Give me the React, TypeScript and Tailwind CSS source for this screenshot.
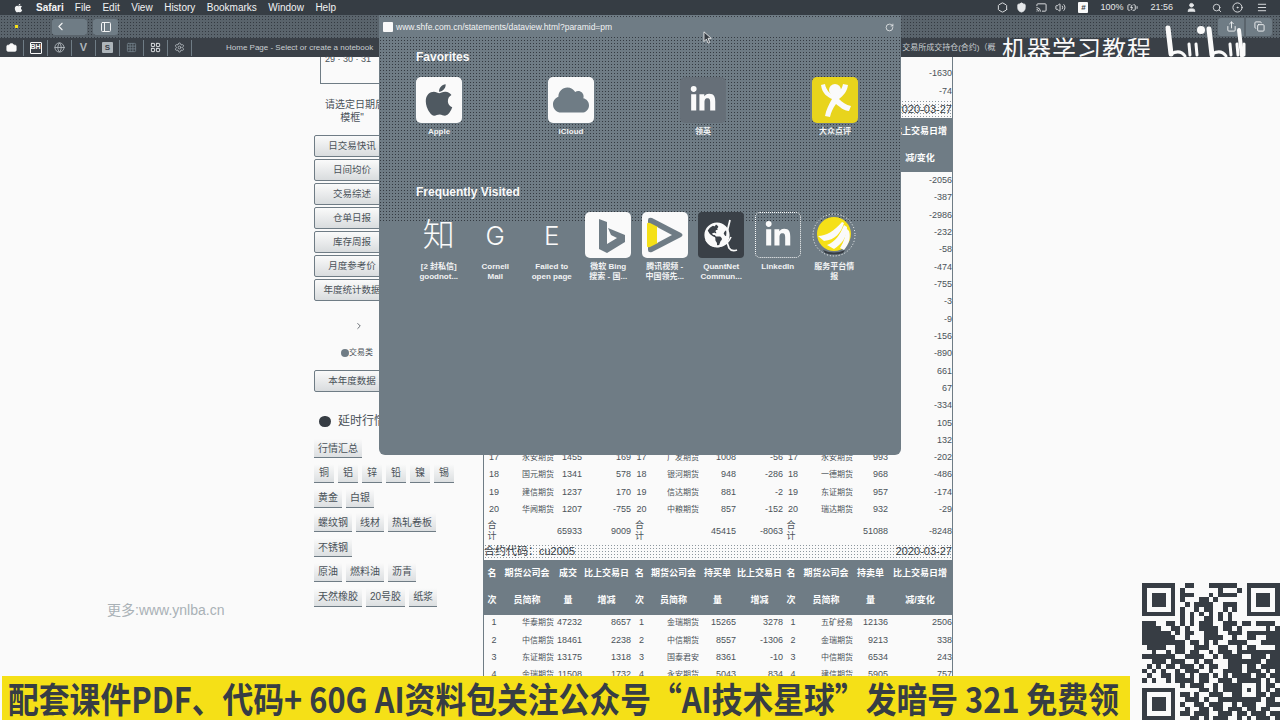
import { ChevronLeft, ChevronRight, PanelLeft, RotateCw, Share, Copy, Search, Volume2, BatteryCharging, Menu, User, Shield, Cast, Globe, Settings, Hexagon, CircleDot, Grid3x3, LayoutGrid, Camera } from "lucide-react";
import { FaApple, FaCloud, FaLinkedinIn, FaGlobeAmericas } from "react-icons/fa";

const DOTS_DARK = "bg-[radial-gradient(circle,#343a41_0.8px,transparent_1px)] bg-[length:3px_3px]";
const DOTS_SOFT = "bg-[radial-gradient(circle,#8d979e_0.8px,transparent_1px)] bg-[length:3px_3px]";

const menus = ["File", "Edit", "View", "History", "Bookmarks", "Window", "Help"];
const sideButtons = ["日交易快讯", "日间均价", "交易综述", "仓单日报", "库存周报", "月度参考价", "年度统计数据"];
const tagRows = [
  ["行情汇总"],
  ["铜", "铝", "锌", "铅", "镍", "锡"],
  ["黄金", "白银"],
  ["螺纹钢", "线材", "热轧卷板"],
  ["不锈钢"],
  ["原油", "燃料油", "沥青"],
  ["天然橡胶", "20号胶", "纸浆"],
];

const hiddenChanges = ["-2056", "-387", "-2986", "-232", "-58", "-474", "-755", "-3", "-9", "-156", "-890", "661", "67", "-334", "105", "132"];

const firstRows = [
  ["17", "永安期货", "1455", "169", "17", "广发期货", "1008", "-56", "17", "永安期货", "993", "-202"],
  ["18", "国元期货", "1341", "578", "18", "银河期货", "948", "-286", "18", "一德期货", "968", "-486"],
  ["19", "建信期货", "1237", "170", "19", "信达期货", "881", "-2", "19", "东证期货", "957", "-174"],
  ["20", "华闻期货", "1207", "-755", "20", "中粮期货", "857", "-152", "20", "瑞达期货", "932", "-29"],
];
const secondRows = [
  ["1", "华泰期货", "47232", "8657", "1", "金瑞期货", "15265", "3278", "1", "五矿经易", "12136", "2506"],
  ["2", "中信期货", "18461", "2238", "2", "中信期货", "8557", "-1306", "2", "金瑞期货", "9213", "338"],
  ["3", "东证期货", "13175", "1318", "3", "国泰君安", "8361", "-10", "3", "中信期货", "6534", "243"],
  ["4", "金瑞期货", "11508", "1732", "4", "永安期货", "5043", "834", "4", "建信期货", "5905", "757"],
];

const qrRows = [
  "00000000011000111111000000000",
  "00000000100000001000100000000",
  "00000000111000101111000000000",
  "00000000100011010000000000000",
  "00000000010111100111000000000",
  "00000000100101100101000000000",
  "00000000101010101010000000000",
  "00000000101001101010000000000",
  "11100110101011100111011011110",
  "11110011010011110110100000101",
  "11111101011001110011101111111",
  "11111110010001111001001100111",
  "11111111101101010011110001111",
  "01111001100111001100101100001",
  "00100101101100101110111111111",
  "11111110011110010111100111011",
  "00111011100101100011111110111",
  "01010110111010110011101101111",
  "10101001011100100111101110101",
  "01001101101011010101111011011",
  "10100101111011001110111110101",
  "00000000101110010111100010110",
  "00000000000011010111101010101",
  "00000000110100111001100011011",
  "00000000011101001111111110110",
  "00000000100110111001011100111",
  "00000000010011011011101101100",
  "00000000110111001110110111011",
  "00000000001101011100101011101",
];

function Finder({ x, y }: { x: number; y: number }) {
  return (
    <g>
      <rect x={x} y={y} width="7" height="7" fill="#373d44" />
      <rect x={x + 1} y={y + 1} width="5" height="5" fill="#fafafa" />
      <rect x={x + 2} y={y + 2} width="3" height="3" fill="#373d44" />
    </g>
  );
}

function QrCode() {
  return (
    <svg viewBox="0 0 29 29" className="w-[138px] h-[138px]" shapeRendering="crispEdges">
      {qrRows.map((row, y) =>
        row.split("").map((c, x) => (c === "1" ? <rect key={`${x}-${y}`} x={x} y={y} width="1" height="1" fill="#373d44" /> : null)),
      )}
      <Finder x={0} y={0} />
      <Finder x={22} y={0} />
      <Finder x={0} y={22} />
    </svg>
  );
}

function cellClass(i: number) {
  if (i % 4 === 0) return "pl-1 text-center";
  if (i % 4 === 1) return "text-right text-[8px] whitespace-nowrap";
  return "text-right whitespace-nowrap";
}

function Row({ cells, h = "h-[17.33px]" }: { cells: string[]; h?: string }) {
  return (
    <div className={`grid grid-cols-[16px_54px_28px_49px_17px_51px_37px_47px_16px_54px_35px_64px] items-center text-[9px] text-[#4a5259] ${h}`}>
      {cells.map((c, i) => (
        <span key={i} className={cellClass(i)}>
          {c}
        </span>
      ))}
    </div>
  );
}

function TotalRow({ cells }: { cells: string[] }) {
  return (
    <div className="grid grid-cols-[16px_54px_28px_49px_17px_51px_37px_47px_16px_54px_35px_64px] items-center text-[9px] leading-[11px] text-[#4a5259] h-[25px]">
      {cells.map((c, i) => (
        <span key={i} className={i % 4 === 0 ? "text-center" : "text-right"}>
          {c}
        </span>
      ))}
    </div>
  );
}

function HeaderBand({ h }: { h: string }) {
  const top = ["名", "期货公司会", "成交", "比上交易日", "名", "期货公司会", "持买单", "比上交易日", "名", "期货公司会", "持卖单", "比上交易日增"];
  const bottom = ["次", "员简称", "量", "增减", "次", "员简称", "量", "增减", "次", "员简称", "量", "减/变化"];
  return (
    <div className={`bg-[#6f7c85] text-white text-[9px] font-bold flex flex-col justify-center ${h}`}>
      {[top, bottom].map((line, n) => (
        <div key={n} className="grid grid-cols-[16px_54px_28px_49px_17px_51px_37px_47px_16px_54px_35px_64px] h-[27px] items-center text-center">
          {line.map((c, i) => (
            <span key={i} className="whitespace-nowrap">
              {c}
            </span>
          ))}
        </div>
      ))}
    </div>
  );
}

function Tag({ label }: { label: string }) {
  return (
    <span className="inline-flex items-center justify-center h-[19px] px-[4px] min-w-[20px] text-[10px] text-[#4a5259] border-b border-[#6f7c85] bg-linear-to-b from-[#fafafa] to-[#dcdfe1]">
      {label}
    </span>
  );
}

function SideButton({ label }: { label: string }) {
  return (
    <div className="w-[76px] h-[22px] flex items-center justify-center text-[9.5px] text-[#4a5259] border border-[#6f7c85] rounded-[2px] bg-linear-to-b from-[#fafafa] to-[#d9dcde]">
      {label}
    </div>
  );
}

function BingIcon() {
  return (
    <svg viewBox="0 0 46 46" className="w-[46px] h-[46px]">
      <path d="M14 7l8 3v22l10-6-6-3-3-7 17 7v7l-18 11-8-4z" fill="#6f7c85" />
    </svg>
  );
}

function PlayIcon() {
  return (
    <svg viewBox="0 0 46 46" className="w-[46px] h-[46px]">
      <path d="M6 8q0-3 4-2l29 15q3 2 0 4L10 40q-4 1-4-2z" fill="#6f7c85" />
      <path d="M5 12q0-2 3-1l8 4v16l-8 4q-3 1-3-1z" fill="#f5e017" />
      <path d="M15 15l15 8-15 8z" fill="#fafafa" />
    </svg>
  );
}

function DianpingIcon() {
  return (
    <svg viewBox="0 0 46 46" className="w-[46px] h-[46px]">
      <circle cx="23" cy="13" r="6" fill="#fafafa" />
      <path d="M9 8c1 9 7 12 11 14-3 5-6 11-7 17l5 1c1-5 3-9 6-13 4 3 8 7 13 7l2-5c-5-1-9-4-12-7 4-3 8-7 9-14l-5-1c-1 6-5 9-9 11-4-1-8-5-9-11z" fill="#fafafa" />
    </svg>
  );
}

function BananaIcon() {
  return (
    <svg viewBox="0 0 46 46" className="w-[46px] h-[46px]">
      <circle cx="23" cy="23" r="21" fill="none" stroke="#fafafa" strokeWidth="1" strokeDasharray="1 2" />
      <circle cx="23" cy="22" r="17" fill="#f5e017" />
      <path d="M7 24c8 0 16-5 24-14l2 1c-3 10-9 17-20 18z" fill="#fafafa" />
      <path d="M16 33c8-3 13-10 17-20l3 2c0 10-5 17-13 22z" fill="#fafafa" />
      <path d="M29 36c4-6 6-13 6-20l3 3c2 7 0 13-5 19z" fill="#fafafa" />
      <path d="M12 38q11 5 22 0l-2 3q-9 3-18 0z" fill="#373d44" />
    </svg>
  );
}

function QuantIcon() {
  return (
    <div className="relative w-[46px] h-[46px] rounded-[4px] bg-[#3a4047] flex items-center justify-center">
      <FaGlobeAmericas className="text-[#fafafa] w-[26px] h-[26px] -ml-2" />
      <svg viewBox="0 0 46 46" className="absolute inset-0">
        <path d="M32 8c-3 10-5 20-1 28 2 3 5 3 8 2" fill="none" stroke="#fafafa" strokeWidth="1.8" />
        <path d="M8 28c6 9 20 9 25-3" fill="none" stroke="#fafafa" strokeWidth="1.6" />
      </svg>
    </div>
  );
}

function BilibiliMark() {
  return (
    <svg viewBox="0 0 100 40" className="w-[100px] h-[40px]" fill="none" stroke="#fafafa" strokeLinecap="round">
      <path d="M8 4l3 26" strokeWidth="5" />
      <path d="M11 30q9-5 14 2" strokeWidth="3" />
      <path d="M29 20l1 11M36 20l1 11" strokeWidth="3" />
      <circle cx="41" cy="6" r="4" fill="#fafafa" stroke="none" />
      <path d="M49 5l3 26" strokeWidth="5" />
      <path d="M52 30q9-5 14 2" strokeWidth="3" />
      <path d="M70 20l1 11M77 20l1 11M84 20l0 11" strokeWidth="3" />
      <path d="M79 6l3 26" strokeWidth="4" />
    </svg>
  );
}

function Favorite({ label, icon, box }: { label: string; icon: React.ReactNode; box: string }) {
  return (
    <div className="w-[46px] flex flex-col items-center">
      <div className={`w-[46px] h-[46px] rounded-[5px] flex items-center justify-center ${box}`}>{icon}</div>
      <span className="mt-[4px] text-[8px] leading-[10px] font-bold text-[#f2f3f4] whitespace-nowrap">{label}</span>
    </div>
  );
}

function Frequent({ lines, icon, box }: { lines: string[]; icon: React.ReactNode; box: string }) {
  return (
    <div className="w-[56.5px] flex flex-col items-center">
      <div className={`w-[46px] h-[46px] rounded-[5px] flex items-center justify-center ${box}`}>{icon}</div>
      <div className="mt-[4px] text-center">
        {lines.map((l) => (
          <div key={l} className="text-[8px] leading-[10px] font-bold text-[#f2f3f4] whitespace-nowrap">
            {l}
          </div>
        ))}
      </div>
    </div>
  );
}

export default function App() {
  return (
    <div className="relative w-[1280px] h-[720px] overflow-hidden bg-[#fafafa] [font-family:'Liberation_Sans','Noto_Sans_CJK_SC',sans-serif]">
      {/* Menu bar */}
      <div className="h-[15px] bg-[#363d44] flex items-center text-[#f2f3f4] text-[10px]">
        <FaApple className="ml-[14px] w-[9px] h-[10px]" />
        <span className="ml-[13px] font-bold">Safari</span>
        <div className="ml-[11px] flex gap-[11.5px]">
          {menus.map((m) => (
            <span key={m}>{m}</span>
          ))}
        </div>
        <div className="ml-auto pr-[12px] flex items-center gap-[8px] text-[#e6e8ea] text-[9px]">
          <Hexagon className="w-[11px] h-[11px]" />
          <Shield className="w-[11px] h-[11px]" fill="#e6e8ea" />
          <Cast className="w-[11px] h-[11px] ml-[1px]" />
          <Volume2 className="w-[11px] h-[11px]" />
          <span className="w-[10px] h-[11px] bg-[#fafafa] text-[#363d44] rounded-[1px] text-[8px] font-bold flex items-center justify-center ml-[4px]">#</span>
          <span className="ml-[4px]">100%</span>
          <BatteryCharging className="w-[13px] h-[11px] -ml-[5px]" />
          <span className="ml-[3px]">21:56</span>
          <User className="w-[11px] h-[11px] ml-[5px]" fill="#e6e8ea" />
          <Search className="w-[10px] h-[10px] ml-[7px]" />
          <CircleDot className="w-[11px] h-[11px] ml-[2px]" />
          <Menu className="w-[12px] h-[11px] ml-[5px]" />
        </div>
      </div>

      {/* Toolbar */}
      <div className={`h-[23px] bg-[#5a646c] flex items-center ${DOTS_DARK}`}>
        <span className="ml-[15px] w-[3px] h-[3px] bg-[#f5e017]" />
        <div className="ml-[34px] w-[35px] h-[16px] bg-[#6f7c85] rounded-[3px] flex items-center pl-[2px]">
          <ChevronLeft className="w-[13px] h-[13px] text-[#f2f3f4]" />
        </div>
        <div className="ml-[6px] w-[25px] h-[16px] bg-[#6f7c85] rounded-[3px] flex items-center justify-center">
          <PanelLeft className="w-[12px] h-[12px] text-[#f2f3f4]" />
        </div>
        <div className="ml-auto mr-[8px] flex items-center">
          <div className="w-[26px] h-[18px] bg-[#6f7c85] rounded-l-[3px] flex items-center justify-center">
            <Share className="w-[11px] h-[11px] text-[#f2f3f4]" />
          </div>
          <div className="ml-[2px] w-[26px] h-[18px] bg-[#6f7c85] rounded-r-[3px] flex items-center justify-center">
            <Copy className="w-[11px] h-[11px] text-[#f2f3f4]" />
          </div>
        </div>
      </div>

      {/* Bookmarks bar */}
      <div className="h-[19px] bg-[#3a4047] flex items-center text-[#aeb5ba]">
        {[
          <Camera key="a" className="w-[11px] h-[11px] text-[#fafafa]" fill="#fafafa" />,
          <span key="b" className="w-[12px] h-[12px] border border-[#fafafa] rounded-[1px] text-[7px] font-bold text-[#fafafa] flex items-center justify-center">BH</span>,
          <Globe key="c" className="w-[11px] h-[11px]" />,
          <span key="d" className="text-[11px] font-bold">V</span>,
          <span key="e" className="w-[11px] h-[11px] bg-[#aeb5ba] rounded-[1px] text-[8px] font-bold text-[#3a4047] flex items-center justify-center">S</span>,
          <Grid3x3 key="f" className="w-[11px] h-[11px] text-[#6f7c85]" />,
          <LayoutGrid key="g" className="w-[11px] h-[11px] text-[#e6e8ea]" />,
          <Settings key="h" className="w-[11px] h-[11px]" />,
        ].map((icon) => (
          <div key={icon.key} className="w-[24px] h-[16px] border-r border-[#6f7c85] flex items-center justify-center">
            {icon}
          </div>
        ))}
        <span className="ml-[34px] text-[8px] text-[#c9ced1] whitespace-nowrap">Home Page - Select or create a notebook</span>
        <span className="ml-[529px] text-[8px] text-[#c9ced1] whitespace-nowrap">交易所成交持仓(合约)（概</span>
      </div>

      {/* Page */}
      <div className="flex pl-[314px]">
        <aside className="w-[169px] shrink-0">
          <div className="ml-[6px] w-[70px] h-[27px] border border-t-0 border-[#6f7c85] text-[9px] leading-[4px] text-[#4a5259] px-[4px]">29 · 30 · 31</div>
          <div className="mt-[14px] w-[76px] text-[10px] leading-[13px] text-[#4a5259] text-center whitespace-nowrap">
            <div className="ml-[6px]">请选定日期后</div>
            <div>模框"</div>
          </div>
          <div className="mt-[11px] flex flex-col gap-[2px]">
            {sideButtons.map((b) => (
              <SideButton key={b} label={b} />
            ))}
          </div>
          <ChevronRight className="ml-[40px] mt-[20px] w-[10px] h-[10px] text-[#4a5259]" />
          <div className="mt-[16px] ml-[27px] flex items-center text-[8px] text-[#4a5259]">
            <span className="w-[8px] h-[8px] rounded-full bg-[#6f7c85]" />
            交易类
          </div>
          <div className="mt-[11px]">
            <SideButton label="本年度数据" />
          </div>
          <div className="mt-[20px] ml-[5px] flex items-center gap-[7px] text-[12px] text-[#4a5259] whitespace-nowrap">
            <span className="w-[12px] h-[11px] rounded-full bg-[#373d44]" />
            延时行情
          </div>
          <div className="mt-[9px] flex flex-col gap-[5.8px]">
            {tagRows.map((row) => (
              <div key={row.join()} className="flex gap-[4px]">
                {row.map((t) => (
                  <Tag key={t} label={t} />
                ))}
              </div>
            ))}
          </div>
        </aside>

        <section className="w-[470px] shrink-0 border-x border-[#6f7c85]">
          <div className="h-[8px]" />
          <Row cells={["", "", "", "", "", "", "", "", "", "", "", "-1630"]} h="h-[17.5px]" />
          <Row cells={["", "", "", "", "", "", "", "", "", "", "", "-74"]} h="h-[17.5px]" />
          <div className={`h-[18px] flex items-center justify-between text-[11px] text-[#373d44] ${DOTS_SOFT}`}>
            <span>合约代码：cu2004</span>
            <span>2020-03-27</span>
          </div>
          <HeaderBand h="h-[54px]" />
          {hiddenChanges.map((v) => (
            <Row key={v} cells={["", "", "", "", "", "", "", "", "", "", "", v]} />
          ))}
          {firstRows.map((r) => (
            <Row key={r[0]} cells={r} />
          ))}
          <TotalRow cells={["合计", "", "65933", "9009", "合计", "", "45415", "-8063", "合计", "", "51088", "-8248"]} />
          <div className={`h-[16px] flex items-center justify-between text-[11px] text-[#373d44] ${DOTS_SOFT}`}>
            <span>合约代码：cu2005</span>
            <span>2020-03-27</span>
          </div>
          <HeaderBand h="h-[55px]" />
          {secondRows.map((r) => (
            <Row key={r[0]} cells={r} />
          ))}
        </section>
      </div>

      {/* Safari favorites popover */}
      <div className="absolute left-[379px] top-[15px] w-[522px] h-[440px] rounded-b-[6px] overflow-hidden bg-[#6f7c85]">
        <div className={`absolute inset-x-0 top-0 h-[3px] ${DOTS_DARK}`} />
        <div className={`absolute inset-x-0 top-[21px] h-[187px] ${DOTS_DARK}`} />
        <div className="relative">
          <div className="h-[3px]" />
          <div className="h-[18px] bg-[#6f7c85] flex items-center px-[4px] text-[#f2f3f4]">
            <span className="w-[10px] h-[10px] bg-[#fafafa] rounded-[1px]" />
            <span className="ml-[3px] text-[8.5px] whitespace-nowrap">www.shfe.com.cn/statements/dataview.html?paramid=pm</span>
            <RotateCw className="ml-auto mr-[3px] w-[9px] h-[9px]" />
          </div>
          <div className="pl-[37px] pt-[14px]">
            <h2 className="text-[12px] leading-[14px] font-bold text-[#fafafa]">Favorites</h2>
            <div className="mt-[13px] flex gap-[86px]">
              <Favorite label="Apple" box="bg-[#fafafa]" icon={<FaApple className="w-[36px] h-[36px] text-[#4f5961]" />} />
              <Favorite label="iCloud" box="bg-[#fafafa]" icon={<FaCloud className="w-[36px] h-[30px] text-[#6f7c85]" />} />
              <Favorite label="领英" box="bg-[#666f78]" icon={<FaLinkedinIn className="w-[28px] h-[28px] text-[#fafafa]" />} />
              <Favorite label="大众点评" box="bg-[#e8d41c]" icon={<DianpingIcon />} />
            </div>
            <h2 className="mt-[48px] text-[12px] leading-[14px] font-bold text-[#fafafa]">Frequently Visited</h2>
          </div>
          <div className="pl-[31.5px] pt-[13px] flex">
            <Frequent lines={["[2 封私信]", "goodnot..."]} box="" icon={<span className="text-[32px] font-light text-[#fafafa]">知</span>} />
            <Frequent lines={["Cornell", "Mail"]} box="" icon={<span className="text-[26px] font-light text-[#fafafa] [font-family:'Inter',sans-serif]">G</span>} />
            <Frequent lines={["Failed to", "open page"]} box="" icon={<span className="text-[26px] font-light text-[#fafafa] [font-family:'Inter',sans-serif]">E</span>} />
            <Frequent lines={["微软 Bing", "搜索 - 国..."]} box="bg-[#fafafa]" icon={<BingIcon />} />
            <Frequent lines={["腾讯视频 -", "中国领先..."]} box="bg-[#fafafa]" icon={<PlayIcon />} />
            <Frequent lines={["QuantNet", "Commun..."]} box="" icon={<QuantIcon />} />
            <Frequent lines={["LinkedIn"]} box="border border-dotted border-[#fafafa]" icon={<FaLinkedinIn className="w-[28px] h-[28px] text-[#fafafa]" />} />
            <Frequent lines={["服务平台情", "报"]} box="" icon={<BananaIcon />} />
          </div>
        </div>
      </div>

      {/* Mouse cursor */}
      <svg viewBox="0 0 12 16" className="absolute left-[703px] top-[31px] w-[10px] h-[13px]">
        <path d="M1 1v12l3-3 2 5 2-1-2-5h4z" fill="#373d44" stroke="#fafafa" strokeWidth="1" />
      </svg>

      {/* Video watermarks */}
      <div className="absolute left-[1002px] top-[35px] text-[24px] leading-[26px] text-[#fafafa] tracking-[1px] [font-family:'Noto_Sans_CJK_SC',sans-serif]">机器学习教程</div>
      <div className="absolute left-[1160px] top-[24px]">
        <BilibiliMark />
      </div>
      <div className="absolute left-[107px] top-[602px] text-[14px] leading-[16px] text-[#a9b1b6]">更多:www.ynlba.cn</div>
      <div className="absolute left-[1142px] top-[583px]">
        <QrCode />
      </div>

      {/* Subtitle bar */}
      <div className="absolute left-[2px] top-[676px] w-[1128px] h-[44px] bg-[#f5e017] flex items-center pl-[6px] overflow-hidden">
        <span className="text-[30.8px] leading-[44px] font-bold text-[#373d44] whitespace-nowrap scale-y-[1.15] [font-family:'Noto_Sans_CJK_SC',sans-serif]">
          配套课件PDF、代码+ 60G AI资料包关注公众号“AI技术星球”发暗号 321 免费领
        </span>
      </div>
    </div>
  );
}
